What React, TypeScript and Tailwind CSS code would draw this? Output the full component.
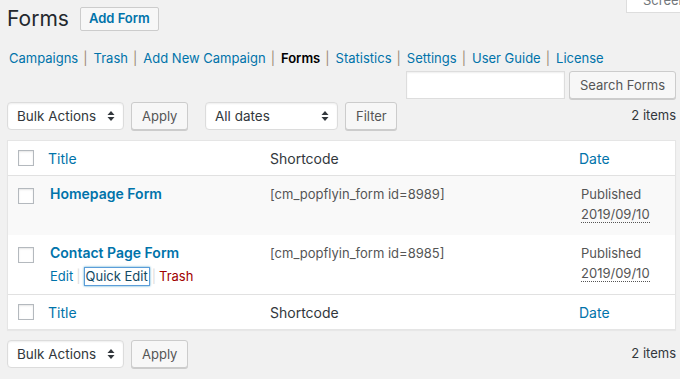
import { ReactNode } from 'react';

const font = { fontFamily: 'Inter, "Liberation Sans", sans-serif' };

function Caret() {
  return (
    <svg width="8" height="12" viewBox="0 0 8 12" className="text-[#32373c]">
      <path d="M4 1 L7.5 5 H0.5 Z" fill="currentColor" />
      <path d="M4 11 L7.5 7 H0.5 Z" fill="currentColor" />
    </svg>
  );
}

function Select({ label, width }: { label: string; width: string }) {
  return (
    <div
      className={`${width} h-[28px] flex items-center justify-between pl-[9px] pr-[8px] bg-white border border-[#dcdcdc] rounded-[4px] shadow-[inset_0_1px_2px_rgba(0,0,0,0.07)] text-[13.5px] text-[#32373c] whitespace-nowrap`}
    >
      <span>{label}</span>
      <Caret />
    </div>
  );
}

function Button({ children, className = '' }: { children: ReactNode; className?: string }) {
  return (
    <button
      className={`h-[28px] px-[10px] pt-[1px] bg-[#f7f7f7] border border-[#cccccc] rounded-[3px] shadow-[0_1px_0_#cccccc] text-[13px] text-[#555555] whitespace-nowrap ${className}`}
    >
      {children}
    </button>
  );
}

function Checkbox() {
  return (
    <div className="w-[16px] h-[16px] bg-white border border-[#b4b9be] shadow-[inset_0_1px_2px_rgba(0,0,0,0.1)]" />
  );
}

function HeadRow({ top }: { top?: boolean }) {
  return (
    <div
      className={`grid grid-cols-[40px_222px_309px_1fr] items-center h-[35px] ${
        top ? 'border-b border-[#e1e1e1]' : 'border-t border-[#e1e1e1]'
      }`}
    >
      <div className="pl-[10px]">
        <Checkbox />
      </div>
      <span className="text-[14px] text-[#0073aa]">Title</span>
      <span className="text-[14px] text-[#32373c]">Shortcode</span>
      <span className="text-[14px] text-[#0073aa]">Date</span>
    </div>
  );
}

function Row({ title, id, alt, actions }: { title: string; id: string; alt?: boolean; actions?: boolean }) {
  return (
    <div className={`grid grid-cols-[40px_222px_309px_1fr] h-[59px] pt-[8px] ${alt ? 'bg-[#f9f9f9]' : 'bg-white'}`}>
      <div className="pl-[10px] pt-[4px]">
        <Checkbox />
      </div>
      <div className="pl-[2px]">
        <div className="text-[14px] leading-[19px] font-semibold text-[#0073aa]">{title}</div>
        {actions && (
          <div className="flex items-center mt-[5px] text-[13px] text-[#0073aa]">
            <span>Edit</span>
            <span className="mx-[3px] text-[#dddddd]">|</span>
            <span className="px-[1px] leading-[17px] text-[#124964] border border-[#5b9dd9] shadow-[0_0_2px_rgba(30,140,190,0.8)]">
              Quick Edit
            </span>
            <span className="ml-[2px] mr-[3px] text-[#dddddd]">|</span>
            <span className="text-[#a00000]">Trash</span>
          </div>
        )}
      </div>
      <div className="pt-[2px] text-[13px] leading-[17px] text-[#555555]">[cm_popflyin_form id={id}]</div>
      <div className="pl-[2px] text-[13px] leading-[20px] text-[#555555]">
        <div>Published</div>
        <div>
          <span className="border-b border-dotted border-[#555555] leading-[16px]">2019/09/10</span>
        </div>
      </div>
    </div>
  );
}

export default function App() {
  return (
    <div className="relative w-[680px] h-[379px] overflow-hidden bg-[#f1f1f1] pl-[7px] pr-[4px]" style={font}>
      {/* Screen options tab */}
      <div className="absolute right-0 top-0 w-[54px] h-[13px] bg-white border-l border-b border-[#dddddd] overflow-hidden">
        <span className="block -mt-[8px] ml-[16px] text-[13px] leading-[17px] text-[#72777c]">Screen</span>
      </div>

      {/* Heading */}
      <div className="flex items-center gap-[11px] pt-[7px] h-[31px]">
        <h1 className="text-[21px] leading-[24px] text-[#23282d]">Forms</h1>
        <button className="h-[24px] px-[8px] bg-[#f7f7f7] border border-[#cccccc] rounded-[2px] text-[13px] font-semibold text-[#0073aa]">
          Add Form
        </button>
      </div>

      {/* Sub nav */}
      <div className="flex items-center mt-[20px] h-[16px] pl-[2px] text-[13px] text-[#0073aa]">
        {['Campaigns', 'Trash', 'Add New Campaign', 'Forms', 'Statistics', 'Settings', 'User Guide', 'License'].map(
          (item, i) => (
            <span key={item} className="flex items-center">
              {i > 0 && <span className="ml-[5px] mr-[6px] text-[#9c8a76]">|</span>}
              <span className={item === 'Forms' ? 'font-semibold text-[#000000]' : ''}>{item}</span>
            </span>
          )
        )}
      </div>

      {/* Search */}
      <div className="flex justify-end items-center gap-[4px] mt-[4px] h-[28px]">
        <div className="w-[159px] h-[28px] bg-white border border-[#dddddd] shadow-[inset_0_1px_2px_rgba(0,0,0,0.07)]" />
        <Button className="w-[107px] text-[13.5px]">Search Forms</Button>
      </div>

      {/* Top tablenav */}
      <div className="flex items-center mt-[3px] h-[28px]">
        <Select label="Bulk Actions" width="w-[117px]" />
        <Button className="ml-[7px] w-[57px]">Apply</Button>
        <div className="ml-[17px]">
          <Select label="All dates" width="w-[133px]" />
        </div>
        <Button className="ml-[7px] w-[52px]">Filter</Button>
        <span className="ml-auto text-[13px] text-[#32373c]">2 items</span>
      </div>

      {/* Table */}
      <div className="mt-[10px] bg-white border border-[#e5e5e5] shadow-[0_1px_1px_rgba(0,0,0,0.04)]">
        <HeadRow top />
        <Row title="Homepage Form" id="8989" alt />
        <Row title="Contact Page Form" id="8985" actions />
        <HeadRow />
      </div>

      {/* Bottom tablenav */}
      <div className="flex items-center mt-[10px] h-[28px]">
        <Select label="Bulk Actions" width="w-[117px]" />
        <Button className="ml-[7px] w-[57px]">Apply</Button>
        <span className="ml-auto text-[13px] text-[#32373c]">2 items</span>
      </div>
    </div>
  );
}
